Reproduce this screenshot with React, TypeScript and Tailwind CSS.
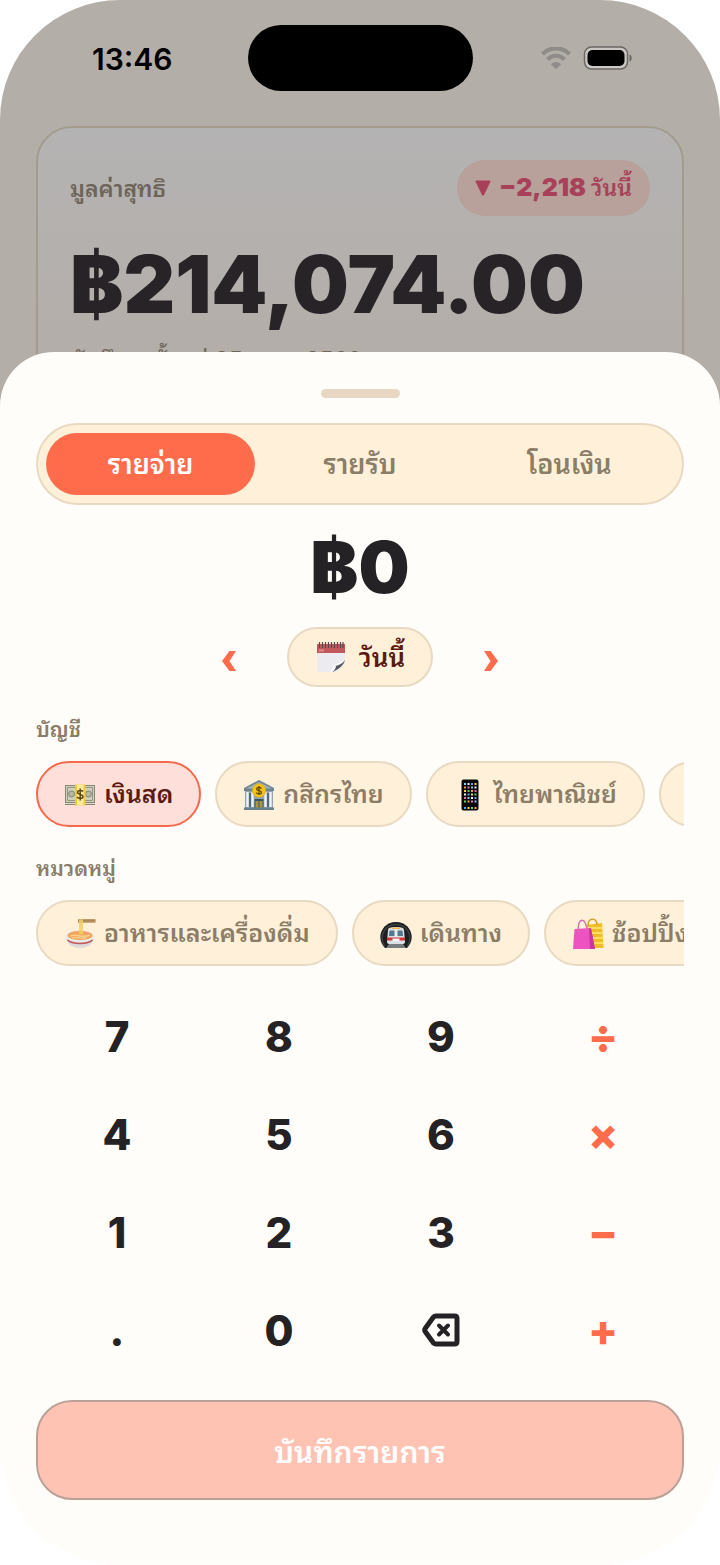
import React from 'react';

const NoteIcon = () => (
  <svg viewBox="0 0 32 32" className="size-8 shrink-0" aria-hidden="true">
    <path d="M2 4h28v20l-9 7H2z" fill="#ececf0" />
    <path d="M2 3h28v9H2z" fill="#c1595c" />
    <path d="M30 19c-1 4-5 9-13 12 3-2 4-4 4-6 4-1 7-3 9-6z" fill="#55565b" />
    <path d="M30 17c-3 5-6 7-10 7 1 3-1 6-4 7l-2 .5c3-1 4-5 4-8 5 0 9-3 12-6.500z" fill="#fcfcfd" />
    <path d="M4.500 1v6M7.500 1v6M10.500 1v6M13.500 1v6M16.500 1v6M19.500 1v6M22.500 1v6M25.500 1v6M28 1v6" stroke="#5b4a4c" strokeWidth="1.200" />
    <path d="M4 8.500h5v2H4z" fill="#e08e90" />
  </svg>
);

const CashIcon = () => (
  <svg viewBox="0 0 32 32" className="size-8 shrink-0" aria-hidden="true">
    <path d="M1 6h30v20H1z" fill="#858774" />
    <path d="M2 7h28v16H2z" fill="#cfcfbe" />
    <path d="M3.500 8.500h25v13h-25z" fill="none" stroke="#94967f" />
    <circle cx="7.500" cy="15" r="3" fill="#b6b8a4" stroke="#84866f" />
    <circle cx="24.500" cy="15" r="3" fill="#b6b8a4" stroke="#84866f" />
    <path d="M1 24.500h30" stroke="#dedfcd" />
    <path d="M11 5.500h10.500v21H11z" fill="#f5cb32" />
    <path d="M13 5.500h6.500v21H13z" fill="#fbe9a0" />
    <path d="M19 12.500c-1-1.500-5.500-1.500-5.500.8 0 2.700 5.500 1.400 5.500 4.200 0 2.500-4.500 2.500-6 .5M16.200 9.500v12" fill="none" stroke="#5a4a1c" strokeWidth="1.500" />
  </svg>
);

const BankIcon = () => (
  <svg viewBox="0 0 32 32" className="size-8 shrink-0" aria-hidden="true">
    <path d="M2 12h28v18H2z" fill="#8fa3b0" />
    <path d="M1 9 16 1l15 8v3H1z" fill="#6d8493" />
    <path d="M3 9.500 16 3l13 6.500z" fill="#9db2be" />
    <path d="M4.500 13v15M9.500 13v15M22.500 13v15M27.500 13v15" stroke="#eef3f5" strokeWidth="2.400" />
    <path d="M7 14v14M25 14v14" stroke="#4c6575" strokeWidth="1.800" />
    <path d="M11.500 20h9v9h-9z" fill="#3b5661" />
    <path d="M12.500 22h3v7h-3zM16.500 22h3v7h-3z" fill="#a99642" />
    <path d="M1 28.500h30V31H1z" fill="#66808f" />
    <circle cx="16" cy="11.500" r="6.800" fill="#f2c419" stroke="#d9a514" strokeWidth=".6" />
    <path d="M18.500 9.500c-1-1.500-5-1.300-5 .5 0 2.200 5 1.200 5 3.400 0 2-4.200 2-5.500.3M16 7v9" fill="none" stroke="#6b4c08" strokeWidth="1.300" />
  </svg>
);

const PHONE_COLORS = ['#7fd1f3', '#5fd06b', '#f2f2f2', '#f7a035', '#57a5f5', '#f36bb1', '#ffd84a'];

const PhoneIcon = () => (
  <svg viewBox="0 0 32 32" className="size-8 shrink-0" aria-hidden="true">
    <rect x="7.500" y=".5" width="17" height="31" rx="2" fill="#08080a" />
    {[4, 7.5, 11, 14.5, 18, 21.5, 28].map((y, row) =>
      [10, 13.5, 17, 20.5].map((x, col) => (
        <rect key={`${x}-${y}`} x={x} y={y} width="2" height="2" fill={PHONE_COLORS[(row * 3 + col * 2) % 7]} />
      ))
    )}
  </svg>
);

const NoodleIcon = () => (
  <svg viewBox="0 0 32 32" className="size-8 shrink-0" aria-hidden="true">
    <path d="M14 1h17.500v3.800H14z" fill="#c09a68" />
    <path d="M14 2.800h17.500" stroke="#9a7543" strokeWidth=".7" />
    <path d="M2 18c0 7 5 12 14 12s14-5 14-12z" fill="#dcdad8" />
    <ellipse cx="16" cy="18" rx="14.500" ry="6" fill="#ecebe9" />
    <ellipse cx="16" cy="17.500" rx="12.500" ry="4.500" fill="#f3a45c" />
    <path d="M6 18c5-3 13 3 20-1M8 20c5-2 9 2 14-.5" fill="none" stroke="#fad18a" strokeWidth="1.500" />
    <path d="M16 1.500v15M18 1.500v15" stroke="#f3cf62" strokeWidth="1.700" />
    <path d="M3.500 22c4 4.500 21 4.500 25 0" fill="none" stroke="#c4585a" strokeWidth="1.500" />
  </svg>
);

const MetroIcon = () => (
  <svg viewBox="0 0 32 32" className="size-8 shrink-0" aria-hidden="true">
    <path d="M5 30C-5 20 2 4 16 4s21 16 11 26z" fill="#1c1e20" />
    <path d="M4.500 28C-1 19 4 6.500 16 6.500S33 19 27.500 28" fill="none" stroke="#3c3f42" strokeWidth="1.500" />
    <path d="M8 12c0-2 2-3 8-3s8 1 8 3l1 12c0 1-1 2-2 2H9c-1 0-2-1-2-2z" fill="#d9e0e4" />
    <path d="M9.500 12.500h13l.5 5.500H9z" fill="#55788f" />
    <path d="M14.500 11h3v8h-3z" fill="#e8ecee" />
    <path d="M12 9.500h8V11h-8z" fill="#f1b34c" />
    <path d="M7 19.500h18v3H7z" fill="#d73638" />
    <path d="M9 26h14l3 4H6z" fill="#777c80" />
    <path d="M12.500 20.500h7v3h-7z" fill="#f4f5f6" />
  </svg>
);

const ShoppingIcon = () => (
  <svg viewBox="0 0 32 32" className="size-8 shrink-0" aria-hidden="true">
    <path d="M15 7 30 5l1.500 25H15z" fill="#f0bc27" />
    <path d="M16 10h14M16 15h15M16 20h15M16 25h15" stroke="#ffdf63" strokeWidth="2" />
    <path d="M16 8c0-9 9-9 9-1" fill="none" stroke="#d59c1e" strokeWidth="1.400" />
    <path d="M2.500 11 19 10l4 21H1z" fill="#ed54c1" />
    <path d="m19 10 4 21h-5l-1-20z" fill="#c838a0" />
    <path d="M6.500 14C4.500-1 14.500-2 15 13" fill="none" stroke="#d66bb9" strokeWidth="1.400" />
  </svg>
);

const BackspaceIcon = () => (
  <svg viewBox="0 0 38 34" className="h-[34px] w-[38px]" fill="none" stroke="currentColor" strokeWidth="5" strokeLinecap="round" strokeLinejoin="round" aria-hidden="true">
    <path d="M14 3h18.500q2.500 0 2.500 2.500v23q0 2.500-2.500 2.500H14q-1.500 0-2.500-1L3.500 19q-1.500-2 0-4l8-11q1-1 2.500-1z" />
    <path d="m17 12.500 9 9M26 12.500l-9 9" strokeWidth="4" />
  </svg>
);

const ChevronIcon = ({ flip = false }: { flip?: boolean }) => (
  <svg viewBox="0 0 14 20" className={flip ? 'h-5 w-3.5 rotate-180' : 'h-5 w-3.5'} fill="currentColor" aria-hidden="true">
    <path d="M7.500 0H14L7.500 10l6.500 10H7.500L0 10z" />
  </svg>
);

const StatusBar = () => (
  <div className="grid h-[126px] grid-cols-[1fr_225px_1fr] items-start pt-[25px] text-black">
    <span className="pt-[18px] pl-[17px] text-center text-[30px] leading-8 font-semibold">13:46</span>
    <div className="h-[66px] rounded-full bg-black" />
    <div className="flex h-[66px] items-center gap-3 pl-[68px]">
      <svg viewBox="0 0 30 22" className="h-[22px] w-[30px] text-[#8f8b88]" fill="none" stroke="currentColor" aria-label="Wi-Fi">
        <path d="M1.500 7C9-.5 21-.5 28.500 7" strokeWidth="4.200" />
        <path d="M6.500 12.500c5-5 12-5 17 0" strokeWidth="4.200" />
        <path d="M10 17.500c3-3.200 7-3.200 10 0l-5 4.500z" fill="currentColor" stroke="none" />
      </svg>
      <svg viewBox="0 0 50 24" className="h-6 w-[50px]" aria-label="Battery">
        <rect x="1.500" y="1" width="43" height="22" rx="7" fill="#cbc7c3" stroke="#6b6764" strokeWidth="1.500" />
        <rect x="4.500" y="4" width="37" height="16" rx="5" />
        <path d="M46.500 8.500c3 1 3 6 0 7z" fill="#6b6764" />
      </svg>
    </div>
  </div>
);

interface ChipProps {
  label: string;
  icon: React.ReactNode;
  active?: boolean;
}

const Chip: React.FC<ChipProps> = ({ label, icon, active }) => (
  <button
    type="button"
    className={
      active
        ? 'flex h-[66px] shrink-0 items-center gap-2 rounded-full border-2 border-[#f7694c] bg-[#fedfd9] px-[26px] pt-0.5 text-[25px] font-semibold whitespace-nowrap text-[#5c1a12]'
        : 'flex h-[66px] shrink-0 items-center gap-2 rounded-full border-2 border-[#e8d9c3] bg-[#fff0d9] px-[26px] pt-0.5 text-[25px] font-semibold whitespace-nowrap text-[#8b7d68]'
    }
  >
    {icon}
    {label}
  </button>
);

const accounts: ChipProps[] = [
  { label: 'เงินสด', icon: <CashIcon />, active: true },
  { label: 'กสิกรไทย', icon: <BankIcon /> },
  { label: 'ไทยพาณิชย์', icon: <PhoneIcon /> },
  { label: '', icon: <BankIcon /> },
];

const categories: ChipProps[] = [
  { label: 'อาหารและเครื่องดื่ม', icon: <NoodleIcon /> },
  { label: 'เดินทาง', icon: <MetroIcon /> },
  { label: 'ช้อปปิ้ง', icon: <ShoppingIcon /> },
];

const ChipRow = ({ title, items }: { title: string; items: ChipProps[] }) => (
  <section>
    <h2 className="flex h-10 items-center text-[21px] font-semibold text-[#8b7d68]">{title}</h2>
    <div className="mt-[11px] flex gap-3.5 overflow-hidden">
      {items.map((item, index) => (
        <Chip key={index} {...item} />
      ))}
    </div>
  </section>
);

const tabs = ['รายจ่าย', 'รายรับ', 'โอนเงิน'];
const keys = ['7', '8', '9', '÷', '4', '5', '6', '×', '1', '2', '3', '−', '.', '0', 'back', '+'];
const operators = ['÷', '×', '−', '+'];

export default function App() {
  return (
    <div className="bg-white font-[Inter,Thonburi,'Noto_Sans_Thai_Looped',Loma,Garuda,'Noto_Sans_Thai','Noto_Sans',sans-serif]">
      <main className="overflow-hidden rounded-[120px] bg-[#fffdf9]">
        <header className="bg-[#b4aea8]">
          <StatusBar />
          <div className="mx-9 h-[300px] rounded-t-[36px] border-2 border-[#a39c8e] bg-linear-to-b from-[#b4b3b3] to-[#b4aca6] px-8 pt-8">
            <div className="flex items-center justify-between">
              <h1 className="pt-0.5 text-[23px] font-semibold text-[#6c6558]">มูลค่าสุทธิ</h1>
              <p className="flex h-14 items-center gap-2 rounded-full bg-[#b8a09b] px-[18px] text-[25px] font-black whitespace-nowrap text-[#a9405a]">
                <svg viewBox="0 0 16 16" className="size-4" fill="currentColor" aria-hidden="true">
                  <path d="M1.500.5h13q1.500 0 .8 1.500L9 15q-1 1.500-2 0L.700 2Q0 .5 1.500.5z" />
                </svg>
                <span>
                  −2,218 <span className="text-[23px] font-semibold">วันนี้</span>
                </span>
              </p>
            </div>
            <p className="mt-6 text-[80px] leading-[88px] font-black text-[#282326]">฿214,074.00</p>
            <p className="mt-4 text-[23px] leading-8 text-[#6c6558]">บันทึกมาตั้งแต่ 25 เม.ย. 2569</p>
          </div>
        </header>

        <section className="relative -mt-[74px] rounded-t-[54px] bg-[#fffdf9] px-9 pt-[37px] pb-[65px]">
          <div className="mx-auto h-[9px] w-[79px] rounded-full bg-[#e8d8c3]" />

          <div role="tablist" className="mt-[25px] grid h-[82px] grid-cols-3 rounded-full border-2 border-[#e8d9c3] bg-[#fff0d9] p-2">
            {tabs.map((tab, i) => (
              <button
                key={tab}
                type="button"
                role="tab"
                aria-selected={i === 0}
                className={
                  i === 0
                    ? 'rounded-full bg-[#ff6c4c] pt-0.5 text-[27px] font-semibold text-white'
                    : 'rounded-full pt-0.5 text-[27px] font-semibold text-[#8b7d68]'
                }
              >
                {tab}
              </button>
            ))}
          </div>

          <output className="mt-[18px] block text-center text-[72px] leading-[88px] font-black text-[#242224]">฿0</output>

          <div className="mt-4 flex items-center justify-center text-[#ff6c4c]">
            <button type="button" aria-label="วันก่อนหน้า" className="grid h-[60px] w-12 place-items-center pt-2"><ChevronIcon /></button>
            <button type="button" className="mx-[34px] flex h-[60px] items-center gap-3 rounded-full border-2 border-[#e8d9c3] bg-[#fff0d9] px-[26px] text-[26px] font-semibold whitespace-nowrap text-[#5c1a12]">
              <NoteIcon />
              วันนี้
            </button>
            <button type="button" aria-label="วันถัดไป" className="grid h-[60px] w-12 place-items-center pt-2"><ChevronIcon flip /></button>
          </div>

          <div className="mt-[23px] space-y-[22px]">
            <ChipRow title="บัญชี" items={accounts} />
            <ChipRow title="หมวดหมู่" items={categories} />
          </div>

          <div className="mt-[21px] grid grid-cols-4">
            {keys.map((key) => (
              <button
                key={key}
                type="button"
                aria-label={key === 'back' ? 'ลบ' : key}
                className={
                  operators.includes(key)
                    ? 'grid h-[98px] place-items-center text-[44px] font-extrabold text-[#ff6c4c]'
                    : 'grid h-[98px] place-items-center text-[42px] font-extrabold text-[#242224]'
                }
              >
                {key === 'back' ? <BackspaceIcon /> : key}
              </button>
            ))}
          </div>

          <button type="button" className="mt-[21px] h-[100px] w-full rounded-[36px] border-2 border-[#baa096] bg-[#ffc3b4] pt-1 text-[30px] font-semibold text-white">
            บันทึกรายการ
          </button>
        </section>
      </main>
    </div>
  );
}
